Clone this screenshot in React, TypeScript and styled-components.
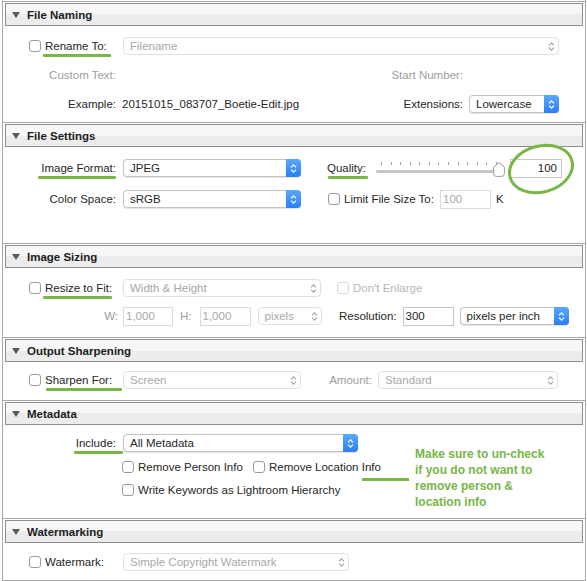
import React, { FC, ReactNode } from 'react';
import styled, { createGlobalStyle, css } from 'styled-components';

const GREEN = '#78b646';

const GlobalStyle = createGlobalStyle`
  html, body {
    margin: 0;
    padding: 0;
    background: #fff;
  }

  body {
    color: #262626;
    font-family: "Liberation Sans", Arial, sans-serif;
    font-size: 11.5px;
  }
`;

const Frame = styled.div`
  border-bottom: 1px solid #a9a9a9;
  border-left: 1px solid #a9a9a9;
  border-right: 1px solid #a9a9a9;
  box-sizing: border-box;
  margin-left: 2px;
  padding-top: 1px;
  width: 584px;
`;

const Section = styled.section`
  border-top: 1px solid #a6a6a6;
  position: relative;
`;

const Header = styled.div`
  align-items: center;
  background: linear-gradient(#f7f7f7 0 50%, #ececec 50% 100%);
  border: 1px solid #8d8d8d;
  box-sizing: border-box;
  color: #1c1c1c;
  display: flex;
  font-weight: bold;
  gap: 7px;
  height: 23px;
  margin: 1px 2px 0;
  padding-left: 6px;
`;

const Triangle = styled.span`
  border-left: 4px solid transparent;
  border-right: 4px solid transparent;
  border-top: 6px solid #5b5b5b;
  height: 0;
  width: 0;
`;

const Body = styled.div<{ $h: number; $pt: number; $gap: number }>`
  box-sizing: border-box;
  display: flex;
  flex-direction: column;
  gap: ${({ $gap }) => $gap}px;
  height: ${({ $h }) => $h}px;
  padding-top: ${({ $pt }) => $pt}px;
`;

const Row = styled.div<{ $h?: number; $pl?: number }>`
  align-items: center;
  display: flex;
  height: ${({ $h }) => $h ?? 22}px;
  padding-left: ${({ $pl }) => $pl ?? 0}px;
`;

const Cell = styled.div<{ $w: number; $end?: boolean; $split?: boolean; $pl?: number; $ml?: number }>`
  align-items: center;
  box-sizing: border-box;
  display: flex;
  flex: none;
  justify-content: ${({ $end, $split }) => ($split ? 'space-between' : $end ? 'flex-end' : 'flex-start')};
  margin-left: ${({ $ml }) => $ml ?? 0}px;
  padding-left: ${({ $pl }) => $pl ?? 0}px;
  width: ${({ $w }) => $w}px;
`;

const Text = styled.span<{ $muted?: boolean; $faint?: boolean; $mark?: [number, number]; $ml?: number }>`
  color: ${({ $muted, $faint }) => ($faint ? '#b8b8b8' : $muted ? '#9d9d9d' : '#262626')};
  line-height: 14px;
  margin-left: ${({ $ml }) => $ml ?? 0}px;
  position: relative;
  white-space: nowrap;

  ${({ $mark }) =>
    $mark &&
    css`
      &::after {
        background: ${GREEN};
        border-radius: 1px;
        content: '';
        height: 2.5px;
        left: ${-$mark[0]}px;
        position: absolute;
        right: ${-$mark[1]}px;
        top: calc(100% + 1px);
      }
    `}
`;

const CheckWrap = styled.span<{ $ml?: number }>`
  align-items: center;
  display: inline-flex;
  gap: 4px;
  margin-left: ${({ $ml }) => $ml ?? 0}px;
`;

const Box = styled.span<{ $disabled?: boolean }>`
  background: #fff;
  border: 1px solid ${({ $disabled }) => ($disabled ? '#d6d6d6' : '#9b9b9b')};
  border-radius: 3px;
  box-sizing: border-box;
  flex: none;
  height: 12px;
  width: 12px;
`;

const SelectBox = styled.div<{ $w: number; $disabled?: boolean; $ml?: number }>`
  align-items: center;
  background: #fff;
  border: 1px solid ${({ $disabled }) => ($disabled ? '#e0e0e0' : '#c4c4c4')};
  border-radius: 4px;
  box-shadow: ${({ $disabled }) => ($disabled ? 'none' : '0 0.5px 1px rgba(0, 0, 0, 0.12)')};
  box-sizing: border-box;
  color: ${({ $disabled }) => ($disabled ? '#a8a8a8' : '#262626')};
  display: flex;
  flex: none;
  height: 18px;
  margin-left: ${({ $ml }) => $ml ?? 0}px;
  padding-left: 6px;
  width: ${({ $w }) => $w}px;
`;

const SelectText = styled.span`
  flex: 1;
  line-height: 14px;
  white-space: nowrap;
`;

const Stepper = styled.span<{ $disabled?: boolean }>`
  align-items: center;
  align-self: stretch;
  background: ${({ $disabled }) => ($disabled ? 'transparent' : 'linear-gradient(#5aa9fb, #2a7ff2)')};
  border-radius: 0 4px 4px 0;
  color: ${({ $disabled }) => ($disabled ? '#a5a5a5' : '#fff')};
  display: flex;
  justify-content: center;
  margin: -1px -1px -1px 0;
  width: 15px;
`;

const Field = styled.div<{ $w: number; $disabled?: boolean; $right?: boolean; $ml?: number }>`
  align-items: center;
  background: #fff;
  border: 1px solid ${({ $disabled }) => ($disabled ? '#dcdcdc' : '#c6c6c6')};
  box-sizing: border-box;
  color: ${({ $disabled }) => ($disabled ? '#a8a8a8' : '#262626')};
  display: flex;
  flex: none;
  height: 19px;
  justify-content: ${({ $right }) => ($right ? 'flex-end' : 'flex-start')};
  margin-left: ${({ $ml }) => $ml ?? 0}px;
  padding: 0 4px 0 2px;
  width: ${({ $w }) => $w}px;
`;

const Slider = styled.div`
  flex: none;
  height: 18px;
  position: relative;
  width: 129px;
`;

const Ticks = styled.div`
  display: flex;
  justify-content: space-between;
  margin: 3px 0 0 5px;
  width: 116px;
`;

const Tick = styled.span`
  background: #a3a3a3;
  height: 3px;
  width: 1px;
`;

const Track = styled.div`
  background: #c6c6c6;
  border-radius: 2px;
  height: 2.5px;
  margin-top: 5px;
  width: 124px;
`;

const Thumb = styled.svg`
  left: 117px;
  position: absolute;
  top: 3px;
`;

const Ellipse = styled.svg`
  left: 499px;
  pointer-events: none;
  position: absolute;
  top: 17px;
`;

const Note = styled.div`
  color: ${GREEN};
  font-size: 12px;
  font-weight: bold;
  left: 412px;
  line-height: 16px;
  position: absolute;
  top: 45px;
`;

const Connector = styled.span`
  background: ${GREEN};
  height: 2.5px;
  left: 359px;
  position: absolute;
  top: 77px;
  width: 47px;
`;

const Chevrons: FC = () => (
  <svg width="7" height="11" viewBox="0 0 7 11">
    <path d="M1 4.3 L3.5 1.8 L6 4.3 M1 6.7 L3.5 9.2 L6 6.7" fill="none" stroke="currentColor" strokeWidth="1.2" />
  </svg>
);

const Select: FC<{ w: number; value: string; disabled?: boolean; ml?: number }> = ({ w, value, disabled, ml }) => (
  <SelectBox $w={w} $disabled={disabled} $ml={ml}>
    <SelectText>{value}</SelectText>
    <Stepper $disabled={disabled}>
      <Chevrons />
    </Stepper>
  </SelectBox>
);

const Check: FC<{ children: ReactNode; disabled?: boolean; ml?: number }> = ({ children, disabled, ml }) => (
  <CheckWrap $ml={ml}>
    <Box $disabled={disabled} />
    {children}
  </CheckWrap>
);

const Panel: FC<{ title: string; children: ReactNode }> = ({ title, children }) => (
  <>
    <Header>
      <Triangle />
      {title}
    </Header>
    {children}
  </>
);

const App: FC = () => (
  <>
    <GlobalStyle />
    <Frame>
      <Section>
        <Panel title="File Naming">
          <Body $h={96} $pt={9} $gap={7}>
            <Row>
              <Cell $w={113} $pl={26}>
                <Check>
                  <Text $mark={[2, 4]}>Rename To:</Text>
                </Check>
              </Cell>
              <Select w={436} value="Filename" disabled ml={7} />
            </Row>
            <Row>
              <Cell $w={113} $end>
                <Text $muted>Custom Text:</Text>
              </Cell>
              <Cell $w={347} $end>
                <Text $muted>Start Number:</Text>
              </Cell>
            </Row>
            <Row>
              <Cell $w={113} $end>
                <Text>Example:</Text>
              </Cell>
              <Cell $w={347} $pl={6} $split>
                <Text>20151015_083707_Boetie-Edit.jpg</Text>
                <Text>Extensions:</Text>
              </Cell>
              <Select w={90} value="Lowercase" ml={6} />
            </Row>
          </Body>
        </Panel>
      </Section>

      <Section>
        <Panel title="File Settings">
          <Body $h={96} $pt={10} $gap={9}>
            <Row>
              <Cell $w={113} $end>
                <Text $mark={[3, 0]}>Image Format:</Text>
              </Cell>
              <Select w={178} value="JPEG" ml={7} />
              <Cell $w={49} $ml={26}>
                <Text $mark={[-1, 2]}>Quality:</Text>
              </Cell>
              <Slider>
                <Ticks>
                  {Array.from({ length: 13 }, (_, i) => (
                    <Tick key={i} />
                  ))}
                </Ticks>
                <Track />
                <Thumb width="12" height="15" viewBox="0 0 12 15">
                  <path
                    d="M6 0.6 L11.4 5.2 L11.4 11.6 Q11.4 14.4 8.6 14.4 L3.4 14.4 Q0.6 14.4 0.6 11.6 L0.6 5.2 Z"
                    fill="#fff"
                    stroke="#9a9a9a"
                    strokeWidth="1"
                  />
                </Thumb>
              </Slider>
              <Field $w={52} $right $ml={5}>
                100
              </Field>
            </Row>
            <Row>
              <Cell $w={113} $end>
                <Text>Color Space:</Text>
              </Cell>
              <Select w={178} value="sRGB" ml={7} />
              <Cell $w={112} $ml={27}>
                <Check>
                  <Text>Limit File Size To:</Text>
                </Check>
              </Cell>
              <Field $w={51} $disabled>
                100
              </Field>
              <Text $ml={5}>K</Text>
            </Row>
          </Body>
        </Panel>
        <Ellipse width="78" height="58" viewBox="0 0 78 58">
          <ellipse cx="39" cy="29" rx="32" ry="23" transform="rotate(-15 39 29)" fill="none" stroke={GREEN} strokeWidth="3" />
        </Ellipse>
      </Section>

      <Section>
        <Panel title="Image Sizing">
          <Body $h={69} $pt={9} $gap={6}>
            <Row>
              <Cell $w={113} $pl={26}>
                <Check>
                  <Text $mark={[2, 0]}>Resize to Fit:</Text>
                </Check>
              </Cell>
              <Select w={198} value="Width & Height" disabled ml={7} />
              <Check disabled ml={16}>
                <Text $faint>Don&apos;t Enlarge</Text>
              </Check>
            </Row>
            <Row>
              <Cell $w={115} $end>
                <Text $muted>W:</Text>
              </Cell>
              <Field $w={50} $disabled $ml={5}>
                1,000
              </Field>
              <Text $muted $ml={7}>
                H:
              </Text>
              <Field $w={51} $disabled $ml={8}>
                1,000
              </Field>
              <Select w={64} value="pixels" disabled ml={7} />
              <Cell $w={75} $end>
                <Text>Resolution:</Text>
              </Cell>
              <Field $w={51} $ml={6}>
                300
              </Field>
              <Select w={109} value="pixels per inch" ml={6} />
            </Row>
          </Body>
        </Panel>
      </Section>

      <Section>
        <Panel title="Output Sharpening">
          <Body $h={38} $pt={7} $gap={0}>
            <Row>
              <Cell $w={113} $pl={26}>
                <Check>
                  <Text $mark={[-1, 10]}>Sharpen For:</Text>
                </Check>
              </Cell>
              <Select w={178} value="Screen" disabled ml={7} />
              <Cell $w={71} $end>
                <Text $muted>Amount:</Text>
              </Cell>
              <Select w={180} value="Standard" disabled ml={6} />
            </Row>
          </Body>
        </Panel>
      </Section>

      <Section>
        <Panel title="Metadata">
          <Body $h={93} $pt={7} $gap={3}>
            <Row>
              <Cell $w={113} $end>
                <Text $mark={[2, 7]}>Include:</Text>
              </Cell>
              <Select w={235} value="All Metadata" ml={7} />
            </Row>
            <Row $h={20} $pl={119}>
              <Cell $w={131}>
                <Check>
                  <Text>Remove Person Info</Text>
                </Check>
              </Cell>
              <Check>
                <Text>Remove Location Info</Text>
              </Check>
            </Row>
            <Row $h={20} $pl={119}>
              <Check>
                <Text>Write Keywords as Lightroom Hierarchy</Text>
              </Check>
            </Row>
          </Body>
        </Panel>
        <Connector />
        <Note>
          Make sure to un-check
          <br />
          if you do not want to
          <br />
          remove person &amp;
          <br />
          location info
        </Note>
      </Section>

      <Section>
        <Panel title="Watermarking">
          <Body $h={37} $pt={8} $gap={0}>
            <Row>
              <Cell $w={113} $pl={26}>
                <Check>
                  <Text>Watermark:</Text>
                </Check>
              </Cell>
              <Select w={226} value="Simple Copyright Watermark" disabled ml={7} />
            </Row>
          </Body>
        </Panel>
      </Section>
    </Frame>
  </>
);

export default App;
